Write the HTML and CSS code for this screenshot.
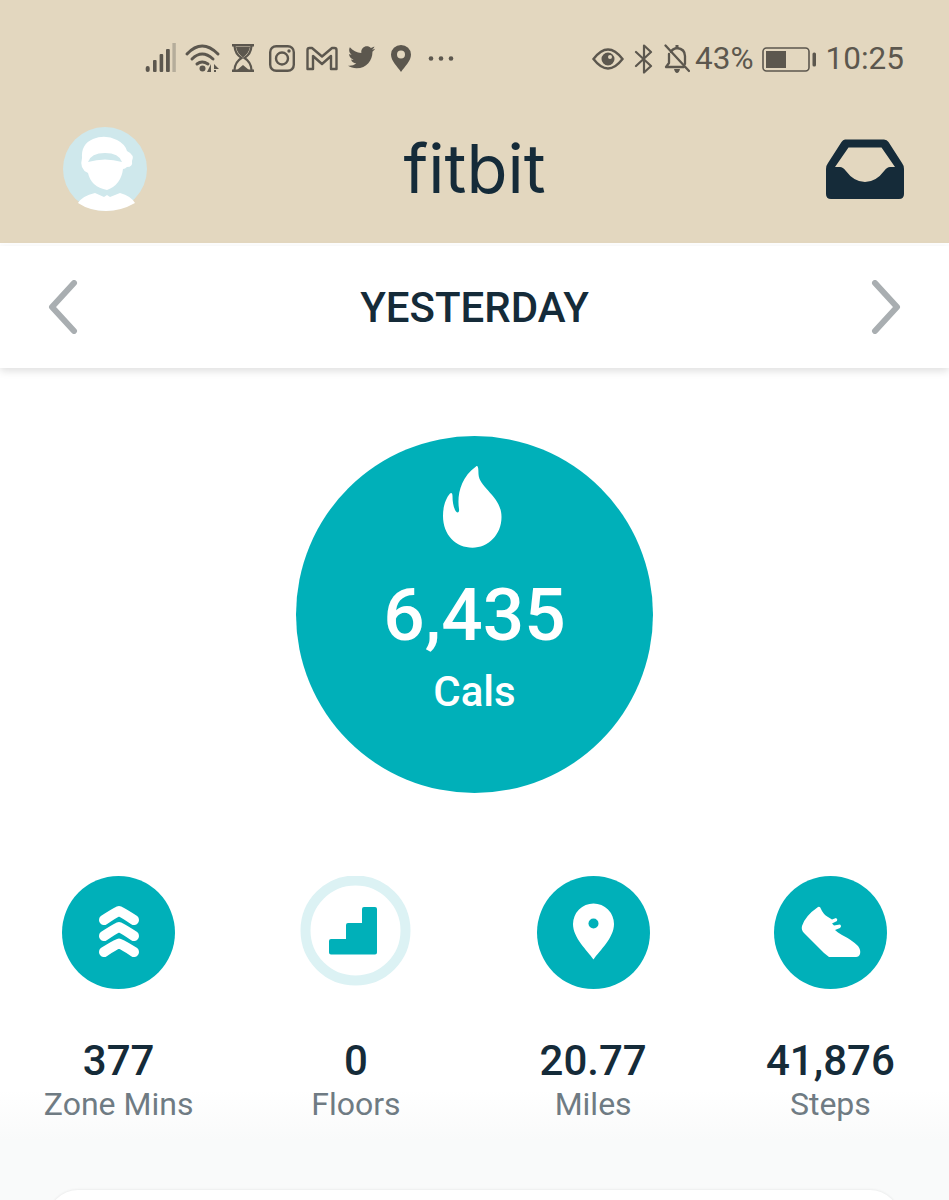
FILE: index.html
```html
<!DOCTYPE html>
<html lang="en">
<head>
    <meta charset="UTF-8">
    <meta name="viewport" content="width=device-width, initial-scale=1.0">
    <title>Fitbit</title>
    <link rel="stylesheet" href="styles.css">
</head>
<body>
    <header class="app-header">
        <div class="status-bar">
            <div class="status-left">
                <svg class="status-cell" viewBox="0 0 40 40">
                    <rect x="4.7" y="27" width="4" height="6" rx="2" fill="#5c574e"/>
                    <rect x="12" y="21" width="3.6" height="12" rx="1" fill="#5c574e"/>
                    <rect x="18.6" y="15" width="3.6" height="18" rx="1" fill="#5c574e"/>
                    <rect x="25" y="10" width="3.8" height="23" rx="1" fill="#5c574e"/>
                    <rect x="31.4" y="4" width="3.4" height="29" fill="#b5ad9b"/>
                </svg>
                <svg class="status-cell" viewBox="0 0 40 40">
                    <g fill="none" stroke="#5c574e" stroke-width="3" stroke-linecap="round">
                        <path d="M6 15 Q21 -1 37 15"/>
                        <path d="M11 20 Q21 10 32 20"/>
                        <path d="M16 25 Q21 21 27 25"/>
                    </g>
                    <circle cx="21.5" cy="29.5" r="3" fill="#5c574e"/>
                    <path d="M30 25 V33 H26 Z M33 25 L38 30 H33 Z M33 31 H35 V33 H33 Z" fill="#5c574e"/>
                </svg>
                <svg class="status-cell" viewBox="0 0 40 40">
                    <path d="M11 5 H33 V7.500 H11 Z M11 30.500 H33 V33 H11 Z" fill="#5c574e"/>
                    <path d="M13.500 7 Q14 15 20.500 19 Q14 23 13.500 31 M30.500 7 Q30 15 23.500 19 Q30 23 30.500 31" fill="none" stroke="#5c574e" stroke-width="2.200"/>
                    <path d="M15 8 H29 Q28 14 22 18.500 Q16 14 15 8 Z M16 31 L22 26 L28 31 Z" fill="#5c574e"/>
                </svg>
                <svg class="status-cell" viewBox="0 0 40 40">
                    <g fill="none" stroke="#5c574e" stroke-width="2.400">
                        <rect x="9.200" y="7.200" width="23.600" height="24.600" rx="6"/>
                        <circle cx="21" cy="19.500" r="6"/>
                    </g>
                    <circle cx="28" cy="12" r="1.700" fill="#5c574e"/>
                </svg>
                <svg class="status-cell" viewBox="0 0 40 40">
                    <path d="M6.500 30 V11 Q6.500 9 8.500 9 H11 L21 17.500 L31 9 H33.500 Q35.500 9 35.500 11 V30 H30 V17 L21 25 L12 17 V30 Z" fill="none" stroke="#5c574e" stroke-width="2.400" stroke-linejoin="round"/>
                </svg>
                <svg class="status-cell" viewBox="0 0 40 40">
                    <path transform="translate(5 2) scale(1.300)" d="M22.460 6c-.77.35-1.600.58-2.460.69.88-.53 1.560-1.370 1.880-2.380-.83.5-1.750.85-2.720 1.050C18.370 4.500 17.260 4 16 4c-2.350 0-4.270 1.920-4.270 4.290 0 .34.04.67.11.98C8.280 9.090 5.110 7.380 3 4.790c-.37.63-.58 1.370-.58 2.150 0 1.490.75 2.810 1.910 3.560-.71 0-1.370-.2-1.950-.5v.03c0 2.080 1.480 3.820 3.440 4.210a4.220 4.220 0 0 1-1.930.07 4.280 4.280 0 0 0 4 2.980 8.521 8.521 0 0 1-5.330 1.840c-.34 0-.68-.02-1.020-.06C3.440 20.290 5.700 21 8.120 21 16 21 20.330 14.460 20.330 8.790c0-.19 0-.37-.01-.56.84-.6 1.560-1.360 2.140-2.230z" fill="#5c574e"/>
                </svg>
                <svg class="status-cell" viewBox="0 0 40 40">
                    <path d="M20 33 C16 27 10 22 10 15.500 A10 9.500 0 0 1 30 15.500 C30 22 24 27 20 33 Z M20 11.500 A4 4 0 1 0 20 19.500 A4 4 0 1 0 20 11.500 Z" fill="#5c574e" fill-rule="evenodd"/>
                </svg>
                <svg class="status-cell" viewBox="0 0 40 40">
                    <circle cx="10" cy="19.500" r="2.300" fill="#5c574e"/>
                    <circle cx="20" cy="19.500" r="2.300" fill="#5c574e"/>
                    <circle cx="30" cy="19.500" r="2.300" fill="#5c574e"/>
                </svg>
            </div>
            <div class="status-right">
                <svg class="icon-eye" viewBox="0 0 32 24">
                    <path d="M1.500 12 Q16 -7 30.500 12 Q16 31 1.500 12 Z" fill="none" stroke="#5c574e" stroke-width="2.400"/>
                    <path d="M16 5.500 A6.500 6.500 0 1 0 16 18.500 A6.500 6.500 0 1 0 16 5.500 Z M18 8 A2 2 0 1 1 18 12 A2 2 0 1 1 18 8 Z" fill="#5c574e" fill-rule="evenodd"/>
                </svg>
                <svg class="icon-bt" viewBox="0 0 20 30">
                    <path d="M2 8 L17 22 L10 28.500 V1.500 L17 8 L2 22" fill="none" stroke="#5c574e" stroke-width="2.200" stroke-linejoin="round" stroke-linecap="round"/>
                </svg>
                <svg class="icon-bell" viewBox="0 0 26 30">
                    <g fill="none" stroke="#5c574e" stroke-width="2.300" stroke-linecap="round" stroke-linejoin="round">
                        <path d="M7 8 Q8 5 13 4 Q21 5 21 12 V20"/>
                        <path d="M5 10 V19 L2 23 H20"/>
                        <path d="M1.500 1.500 L25 27"/>
                    </g>
                    <path d="M11.500 1 H14.500 V4 H11.500 Z M10 25 H16 Q15 29 13 29 Q11 29 10 25 Z" fill="#5c574e"/>
                </svg>
                <span class="status-text status-pct">43%</span>
                <svg class="icon-battery" viewBox="0 0 54 25">
                    <rect x="1" y="1" width="46" height="23" rx="3.500" fill="none" stroke="#5c574e" stroke-width="1.600"/>
                    <rect x="4" y="4" width="20" height="17" fill="#5c574e"/>
                    <rect x="50.500" y="5.500" width="3.500" height="14" rx="1.500" fill="#5c574e"/>
                </svg>
                <span class="status-text">10:25</span>
            </div>
        </div>
        <div class="top-bar">
            <svg class="avatar" viewBox="0 0 84 84">
                <circle cx="42" cy="42" r="42" fill="#cfe8ec"/>
                <path d="M19 31 Q18 17 30 12 Q42 7 54 13 Q62 17 64 24 Q72 28 69 34 Q70 40 64 40 Q62 42 60 42 Q58 58 44 63 Q28 60 25 46 Q16 42 19 31 Z" fill="#fff"/>
                <path d="M25 35 Q28 26 42 26 Q56 26 59 35 Q42 30 25 35 Z" fill="#cfe8ec"/>
                <path d="M15 76 Q19 69 32 66 L41 70 L44 68 L47 70 L57 66 Q68 69 72 76 Q58 84 43 84 Q27 84 15 76 Z" fill="#fff"/>
            </svg>
            <div class="logo">fitbit</div>
            <svg class="inbox" viewBox="0 0 78 60">
                <path d="M19 .5 H58 Q61 .5 62.500 3 L76 24 Q78 26.500 78 30 V55 Q78 60 73 60 H5 Q0 60 0 55 V30 Q0 26.500 2 24 L15.500 3 Q17 .5 19 .5 Z M22.500 8.500 L9 28 H14 Q17 28 19.500 31.500 Q28 43 39 43 Q50 43 58.500 31.500 Q61 28 64 28 H69 L55.500 8.500 Z" fill="#152b39" fill-rule="evenodd"/>
            </svg>
        </div>
    </header>

    <nav class="date-bar">
        <svg class="chevron" viewBox="0 0 30 54">
            <path d="M26 3 L4 27 L26 51" fill="none" stroke="#a9aeb1" stroke-width="6" stroke-linecap="round" stroke-linejoin="round"/>
        </svg>
        <div class="date-title">YESTERDAY</div>
        <svg class="chevron" viewBox="0 0 30 54">
            <path d="M4 3 L26 27 L4 51" fill="none" stroke="#a9aeb1" stroke-width="6" stroke-linecap="round" stroke-linejoin="round"/>
        </svg>
    </nav>

    <main class="dashboard">
        <div class="cals-circle">
            <svg class="flame" viewBox="0 0 59 82">
                <path d="M33 .5 C35 -1 35.500 2 35.500 8 C36 22 58.500 30 58.500 51 C58.500 69 45 81.700 29.500 81.700 C13 81.700 0 69 0 50 C0 40 3 32 7 27.500 C8.500 26 9.500 27.500 9.500 30 C9.500 36 10.500 42 13 45.500 C15 47.500 16.500 46 16 43 C14 30 17 12 33 .5 Z" fill="#fff"/>
            </svg>
            <div class="cals-value">6,435</div>
            <div class="cals-label">Cals</div>
        </div>

        <div class="stats">
            <div class="stat">
                <svg class="stat-icon" viewBox="0 0 113 113">
                    <circle cx="56.500" cy="56.500" r="56.500" fill="#00b0b9"/>
                    <g fill="none" stroke="#fff" stroke-width="10" stroke-linecap="round" stroke-linejoin="round">
                        <path d="M42 44 Q51 38 57 35 Q63 38 72 44"/>
                        <path d="M42 60 Q51 54 57 51 Q63 54 72 60"/>
                        <path d="M42 76 Q51 70 57 67.500 Q63 70 72 76"/>
                    </g>
                </svg>
                <div class="stat-value">377</div>
                <div class="stat-label">Zone Mins</div>
            </div>
            <div class="stat">
                <svg class="stat-icon" viewBox="0 0 113 113">
                    <circle cx="56.500" cy="54.500" r="50" fill="none" stroke="#dcf2f4" stroke-width="10"/>
                    <path d="M65 31 H76 Q78 31 78 33 V76.500 Q78 78.500 76 78.500 H32 Q30 78.500 30 76.500 V65 Q30 63 32 63 H47 V49 Q47 47 49 47 H63 V33 Q63 31 65 31 Z" fill="#00b0b9"/>
                </svg>
                <div class="stat-value">0</div>
                <div class="stat-label">Floors</div>
            </div>
            <div class="stat">
                <svg class="stat-icon" viewBox="0 0 113 113">
                    <circle cx="56.500" cy="56.500" r="56.500" fill="#00b0b9"/>
                    <path d="M56.500 83.500 C50 74 36 62 36 48 A20.500 20.500 0 0 1 77 48 C77 62 63 74 56.500 83.500 Z" fill="#fff"/>
                    <circle cx="56.500" cy="47.500" r="5" fill="#00b0b9"/>
                </svg>
                <div class="stat-value">20.77</div>
                <div class="stat-label">Miles</div>
            </div>
            <div class="stat">
                <svg class="stat-icon" viewBox="0 0 113 113">
                    <circle cx="56.500" cy="56.500" r="56.500" fill="#00b0b9"/>
                    <path d="M44 31 Q46 30 47 33 Q49 38 54 41 L58 43.500 L62 42 Q64 43 63 45 L58 47.500 L60 49.500 L66 48.500 Q68 50 66 52 L61 54 L64 56.500 L68 59 Q78 64 84 70 Q87 74 86 78 Q85 81 82 81 H55 L50 77 Q38 65 30 57 Q27 54 28 50 Q31 40 44 31 Z" fill="#fff"/>
                </svg>
                <div class="stat-value">41,876</div>
                <div class="stat-label">Steps</div>
            </div>
        </div>

        <div class="card"></div>
    </main>
</body>
</html>
```

FILE: styles.css
```css
html, body {
    margin: 0;
    height: 1200px;
    overflow: hidden;
}

body {
    background: #fff;
    font-family: 'Roboto', 'Liberation Sans', sans-serif;
    color: #152b39;
}

.app-header {
    background: #e3d7bf;
    height: 243px;
    padding-top: 39px;
    box-sizing: border-box;
}

.status-bar {
    display: flex;
    justify-content: space-between;
    align-items: center;
    height: 40px;
    padding: 0 45px 0 141px;
}

.status-left {
    display: flex;
}

.status-cell {
    width: 40px;
    height: 40px;
}

.status-right {
    display: flex;
    align-items: center;
    gap: 10px;
}

.status-text {
    font-size: 31.5px;
    color: #5c574e;
    line-height: 40px;
}

.status-pct {
    margin-left: -5px;
}

.icon-eye {
    width: 32px;
    height: 24px;
}

.icon-bt {
    width: 20px;
    height: 30px;
}

.icon-bell {
    width: 26px;
    height: 30px;
}

.icon-battery {
    width: 54px;
    height: 25px;
    margin-left: -2px;
}

.top-bar {
    display: grid;
    grid-template-columns: 1fr auto 1fr;
    align-items: center;
    height: 148px;
    margin-top: 16px;
    padding: 0 45px;
}

.avatar {
    width: 84px;
    height: 84px;
    margin-left: 18px;
}

.logo {
    font-family: 'Inter', sans-serif;
    font-size: 67px;
    line-height: 70px;
    color: #152b39;
}

.inbox {
    width: 78px;
    height: 60px;
    justify-self: end;
}

.date-bar {
    display: flex;
    justify-content: space-between;
    align-items: center;
    height: 122px;
    margin-top: 3px;
    padding: 0 48px;
    background: #fff;
    position: relative;
    box-shadow: 0 3px 8px rgba(0, 0, 0, 0.13);
}

.chevron {
    width: 30px;
    height: 54px;
}

.date-title {
    font-size: 42px;
    font-weight: 500;
    color: #152b39;
}

.dashboard {
    height: 832px;
    padding-top: 68px;
    box-sizing: border-box;
    background: linear-gradient(#fff 0, #fff 722px, #f9fafa 772px);
}

.cals-circle {
    width: 357px;
    height: 357px;
    margin: 0 auto;
    padding-top: 30px;
    box-sizing: border-box;
    border-radius: 50%;
    background: #00b0b9;
    color: #fff;
    display: flex;
    flex-direction: column;
    align-items: center;
}

.flame {
    width: 59px;
    height: 82px;
    margin-right: 4px;
}

.cals-value {
    font-size: 73px;
    font-weight: 500;
    line-height: 80px;
    margin-top: 27px;
}

.cals-label {
    font-size: 42px;
    font-weight: 500;
    line-height: 44px;
    margin-top: 15px;
}

.stats {
    display: grid;
    grid-template-columns: repeat(4, 1fr);
    margin-top: 83px;
}

.stat {
    display: flex;
    flex-direction: column;
    align-items: center;
}

.stat-icon {
    width: 113px;
    height: 113px;
}

.stat-value {
    font-size: 42px;
    font-weight: 500;
    line-height: 43px;
    margin-top: 50px;
    color: #152b39;
}

.stat-label {
    font-size: 32px;
    line-height: 44px;
    color: #6f7b83;
}

.card {
    height: 60px;
    margin: 64px 49px 0 48px;
    background: #fff;
    border-radius: 30px 30px 0 0;
    box-shadow: 0 0 3px rgba(0, 0, 0, 0.1);
}
```
